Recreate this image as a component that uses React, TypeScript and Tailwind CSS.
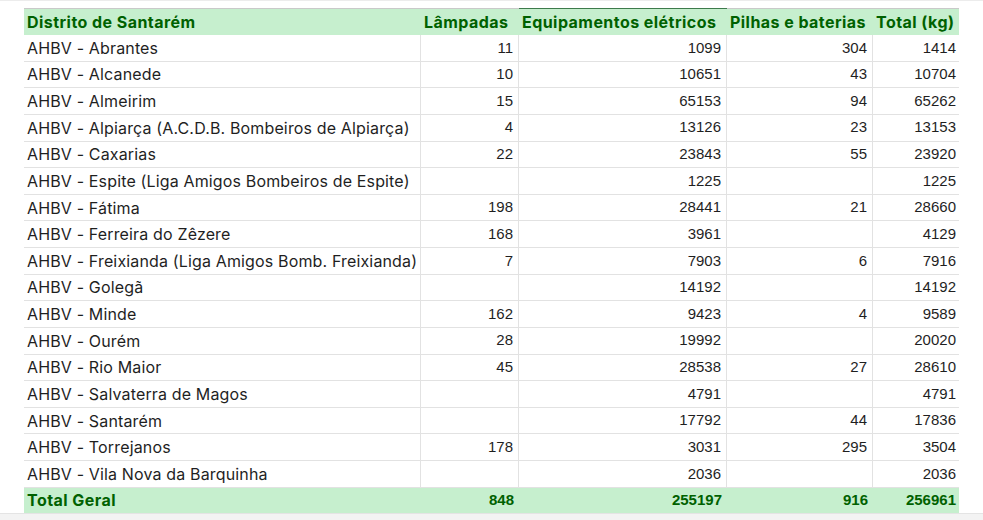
const COLS = 'grid grid-cols-[397px_98px_208px_146px_86px]';

const ROWS: [string, string, string, string, string][] = [
  ['AHBV - Abrantes', '11', '1099', '304', '1414'],
  ['AHBV - Alcanede', '10', '10651', '43', '10704'],
  ['AHBV - Almeirim', '15', '65153', '94', '65262'],
  ['AHBV - Alpiarça (A.C.D.B. Bombeiros de Alpiarça)', '4', '13126', '23', '13153'],
  ['AHBV - Caxarias', '22', '23843', '55', '23920'],
  ['AHBV - Espite (Liga Amigos Bombeiros de Espite)', '', '1225', '', '1225'],
  ['AHBV - Fátima', '198', '28441', '21', '28660'],
  ['AHBV - Ferreira do Zêzere', '168', '3961', '', '4129'],
  ['AHBV - Freixianda (Liga Amigos Bomb. Freixianda)', '7', '7903', '6', '7916'],
  ['AHBV - Golegã', '', '14192', '', '14192'],
  ['AHBV - Minde', '162', '9423', '4', '9589'],
  ['AHBV - Ourém', '28', '19992', '', '20020'],
  ['AHBV - Rio Maior', '45', '28538', '27', '28610'],
  ['AHBV - Salvaterra de Magos', '', '4791', '', '4791'],
  ['AHBV - Santarém', '', '17792', '44', '17836'],
  ['AHBV - Torrejanos', '178', '3031', '295', '3504'],
  ['AHBV - Vila Nova da Barquinha', '', '2036', '', '2036'],
];

const HEADERS = ['Distrito de Santarém', 'Lâmpadas', 'Equipamentos elétricos', 'Pilhas e baterias', 'Total (kg)'];

export default function App() {
  return (
    <div className="relative h-[520px] w-[983px] overflow-hidden bg-white">
      <div className="h-[8px] border-t border-[#ececec]" />

      <div className="ml-[24px] w-[935px]">
        {/* Header */}
        <div className={`${COLS} h-[27px] border-t border-[#c9c9c9] bg-[#c6efce] font-['Inter',sans-serif] text-[16px] font-bold tracking-[0.45px] text-[#006100]`}>
          {HEADERS.map((h, i) => (
            <div
              key={h}
              className={`flex items-center whitespace-nowrap pl-[3px] ${i === 2 ? '-mt-px border-t border-[#3d7a4c]' : ''}`}
            >
              {h}
            </div>
          ))}
        </div>

        {/* Body */}
        {ROWS.map((r) => (
          <div key={r[0]} className={`${COLS} h-[26.63px] text-[#1f1f1f]`}>
            <div className="flex items-center whitespace-nowrap border-b border-r border-[#e2e2e2] pl-[3px] font-['Inter',sans-serif] text-[16px] tracking-[0.15px]">
              {r[0]}
            </div>
            {r.slice(1).map((v, i) => (
              <div
                key={i}
                className={`flex items-center justify-end border-b border-[#e2e2e2] font-['Liberation_Sans',Arial,sans-serif] text-[15px] ${
                  i === 3 ? 'pr-[3px]' : 'border-r pr-[5px]'
                }`}
              >
                {v}
              </div>
            ))}
          </div>
        ))}

        {/* Total */}
        <div className={`${COLS} h-[25px] bg-[#c6efce] font-bold text-[#006100]`}>
          <div className="flex items-center pl-[3px] font-['Inter',sans-serif] text-[16px] tracking-[0.45px]">Total Geral</div>
          {['848', '255197', '916', '256961'].map((v, i) => (
            <div
              key={v}
              className={`flex items-center justify-end font-['Liberation_Sans',Arial,sans-serif] text-[15px] ${
                i === 3 ? 'pr-[3px]' : 'pr-[5px]'
              }`}
            >
              {v}
            </div>
          ))}
        </div>
      </div>

      <div className="h-[8px] border-t border-[#e4e4e4] bg-[#f3f3f3]" />
    </div>
  );
}
